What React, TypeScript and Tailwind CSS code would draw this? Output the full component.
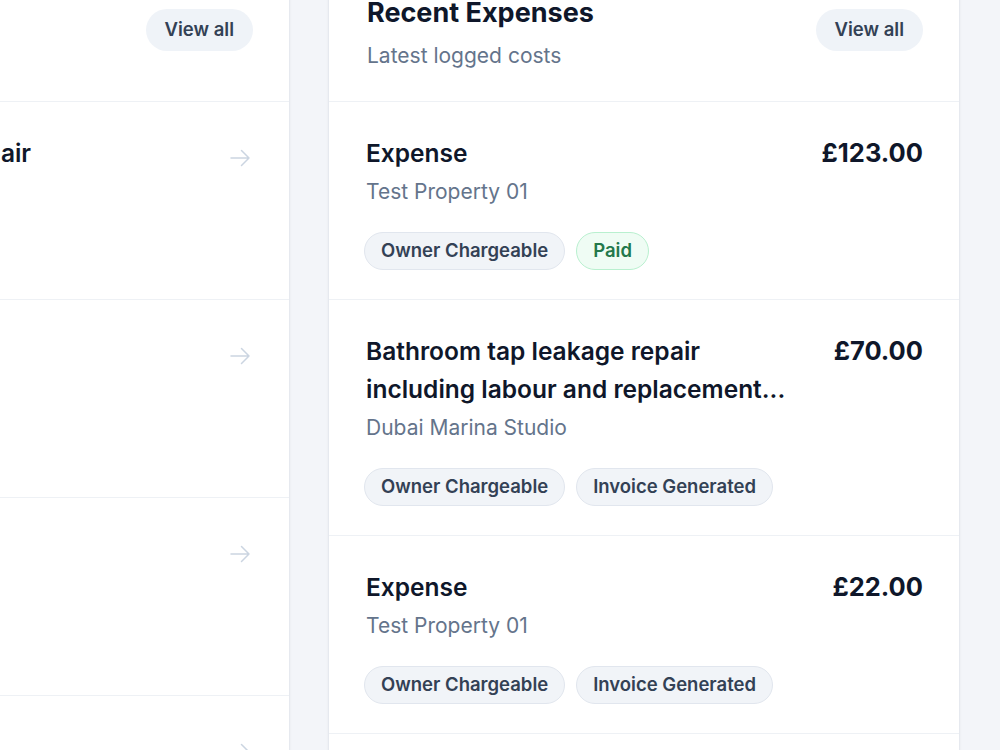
import React from "react";
import { HiOutlineArrowRight } from "react-icons/hi2";

type Badge = { label: string; tone?: "gray" | "green" };

function Pill({ label, tone = "gray" }: Badge) {
  const cls =
    tone === "green"
      ? "bg-[#effcf4] border-[#b9f0cf] text-[#23784b]"
      : "bg-[#f1f4f8] border-[#e1e6ee] text-[#334155]";
  return (
    <span
      className={`inline-flex h-[38px] items-center rounded-full border px-[16px] text-[18.5px] font-semibold ${cls}`}
    >
      {label}
    </span>
  );
}

function CardHeader({ title, subtitle }: { title: string; subtitle: string }) {
  return (
    <div className="flex items-start justify-between border-b border-[#eef1f5] pl-[38px] pr-[36px] pt-[33px] pb-[29px]">
      <div>
        <h2 className="text-[27px] font-bold leading-[34px] text-[#0f172a]">{title}</h2>
        <p className="mt-[10px] text-[21px] leading-[32px] text-[#64748b]">{subtitle}</p>
      </div>
      <button className="mt-[13px] h-[42px] rounded-full bg-[#eff3f8] px-[19px] text-[18.5px] font-semibold text-[#334155]">
        View all
      </button>
    </div>
  );
}

type Expense = { title: string; property: string; amount: string; badges: Badge[] };

const expenses: Expense[] = [
  {
    title: "Expense",
    property: "Test Property 01",
    amount: "£123.00",
    badges: [{ label: "Owner Chargeable" }, { label: "Paid", tone: "green" }],
  },
  {
    title: "Bathroom tap leakage repair including labour and replacement...",
    property: "Dubai Marina Studio",
    amount: "£70.00",
    badges: [{ label: "Owner Chargeable" }, { label: "Invoice Generated" }],
  },
  {
    title: "Expense",
    property: "Test Property 01",
    amount: "£22.00",
    badges: [{ label: "Owner Chargeable" }, { label: "Invoice Generated" }],
  },
  {
    title: "Expense",
    property: "Test Property 02",
    amount: "£15.00",
    badges: [{ label: "Owner Chargeable" }],
  },
];

type Job = { title: string; property: string; badge: string };

const jobs: Job[] = [
  { title: "Bathroom tap leakage repair", property: "Dubai Marina Studio", badge: "In Progress" },
  { title: "Boiler service", property: "Test Property 01", badge: "Open" },
  { title: "Broken window latch", property: "Test Property 01", badge: "Scheduled" },
  { title: "Smoke alarm check", property: "Test Property 02", badge: "Open" },
];

export default function App() {
  return (
    <div
      className="h-[750px] w-[1000px] overflow-hidden bg-[#f3f5f9]"
      style={{ fontFamily: "Inter, 'Noto Sans', sans-serif" }}
    >
      <div className="ml-[-342px] mt-[-38px] grid w-[1302px] grid-cols-[632px_632px] gap-[38px]">
        {/* Left card */}
        <div className="rounded-[20px] border border-[#e6e9ef] bg-white shadow-[0_1px_3px_rgba(15,23,42,0.05)]">
          <CardHeader title="Maintenance Jobs" subtitle="Open requests" />
          {jobs.map((j, i) => (
            <div
              key={i}
              className="flex items-start gap-6 border-b border-[#eef1f5] pl-[38px] pr-[37px] pt-[32px] pb-[29px]"
            >
              <div className="min-w-0 flex-1">
                <div className="text-[24.5px] font-semibold leading-[38px] text-[#0f172a]">{j.title}</div>
                <div className="mt-1 text-[21px] leading-[32px] text-[#64748b]">{j.property}</div>
                <div className="mt-[24px] flex gap-[11px]">
                  <Pill label={j.badge} />
                </div>
              </div>
              <HiOutlineArrowRight className="mt-[12px] h-[24px] w-[24px] shrink-0 text-[#cbd5e1]" />
            </div>
          ))}
        </div>

        {/* Right card */}
        <div className="rounded-[20px] border border-[#e6e9ef] bg-white shadow-[0_1px_3px_rgba(15,23,42,0.05)]">
          <CardHeader title="Recent Expenses" subtitle="Latest logged costs" />
          {expenses.map((e, i) => (
            <div key={i} className="border-b border-[#eef1f5] pl-[37px] pr-[36px] pt-[32px] pb-[29px]">
              <div className="flex items-start justify-between gap-7">
                <div className="min-w-0 max-w-[436px] flex-1">
                  <div className="text-[24.5px] font-semibold leading-[38px] text-[#0f172a]">
                    {e.title}
                  </div>
                  <div className="mt-1 text-[21px] leading-[32px] text-[#64748b]">{e.property}</div>
                </div>
                <div className="shrink-0 text-[25.5px] font-bold leading-[38px] text-[#0f172a]">
                  {e.amount}
                </div>
              </div>
              <div className="-ml-[2px] mt-[24px] flex gap-[11px]">
                {e.badges.map((b, k) => (
                  <Pill key={k} {...b} />
                ))}
              </div>
            </div>
          ))}
        </div>
      </div>
    </div>
  );
}
